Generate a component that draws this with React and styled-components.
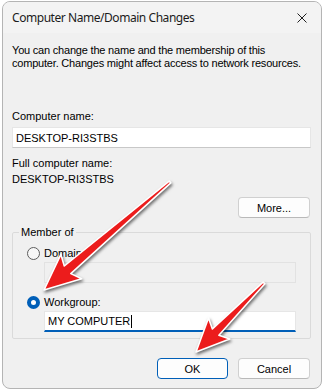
import styled, { createGlobalStyle } from "styled-components";

const GlobalStyle = createGlobalStyle`
  html, body {
    margin: 0;
    padding: 0;
    background: #ffffff;
  }
`;

const ui = `"Liberation Sans", Arial, sans-serif`;

export default function App() {
  return (
    <>
      <GlobalStyle />
      <Page>
        <Window>
          <TitleBar>
            <Title>Computer Name/Domain Changes</Title>
            <CloseIcon viewBox="0 0 10 10">
              <path d="M0.5 0.5 L9.5 9.5 M9.5 0.5 L0.5 9.5" />
            </CloseIcon>
          </TitleBar>
          <Body>
            <Intro>
              You can change the name and the membership of this
              <br />
              computer. Changes might affect access to network resources.
            </Intro>
            <Label $top={40}>Computer name:</Label>
            <Field>DESKTOP-RI3STBS</Field>
            <Label $top={9}>Full computer name:</Label>
            <Value>DESKTOP-RI3STBS</Value>
            <ButtonRow $top={11}>
              <Button>More...</Button>
            </ButtonRow>
            <Group>
              <Legend>Member of</Legend>
              <RadioRow>
                <Radio />
                <RadioLabel>Domain:</RadioLabel>
              </RadioRow>
              <Field $disabled $indent>
                &nbsp;
              </Field>
              <RadioRow $top={13}>
                <Radio $checked />
                <RadioLabel>Workgroup:</RadioLabel>
              </RadioRow>
              <Field $indent $active>
                MY COMPUTER
                <Caret />
              </Field>
            </Group>
            <ButtonRow $top={19}>
              <Button $primary>OK</Button>
              <Button>Cancel</Button>
            </ButtonRow>
          </Body>
        </Window>
        <Overlay viewBox="0 0 323 391">
          <Arrow tail={[170, 182]} tip={[44, 290]} head={36} half={16} neck={5} />
          <Arrow tail={[264, 283]} tip={[196, 352]} head={33} half={15} neck={4.5} />
        </Overlay>
      </Page>
    </>
  );
}

function Arrow({ tail, tip, head, half, neck }) {
  const [tx, ty] = tail;
  const [px, py] = tip;
  const dx = px - tx;
  const dy = py - ty;
  const len = Math.hypot(dx, dy);
  const ux = dx / len;
  const uy = dy / len;
  const nx = -uy;
  const ny = ux;
  const bx = px - ux * head;
  const by = py - uy * head;
  const kx = bx + ux * 5;
  const ky = by + uy * 5;
  const pts = [
    [tx + nx * 1.2, ty + ny * 1.2],
    [kx + nx * neck, ky + ny * neck],
    [bx + nx * half, by + ny * half],
    [px, py],
    [bx - nx * half, by - ny * half],
    [kx - nx * neck, ky - ny * neck],
    [tx - nx * 1.2, ty - ny * 1.2],
  ]
    .map((p) => p.map((v) => v.toFixed(1)).join(","))
    .join(" ");
  return <ArrowShape points={pts} />;
}

const Page = styled.div`
  position: relative;
  width: 323px;
  height: 391px;
  overflow: hidden;
  font-family: ${ui};
`;

const Window = styled.div`
  box-sizing: border-box;
  margin: 1px 0 0 2px;
  width: 320px;
  height: 388px;
  border: 1px solid #b4b4b4;
  border-radius: 8px;
  background: #f0f0f0;
  overflow: hidden;
  display: flex;
  flex-direction: column;
`;

const TitleBar = styled.div`
  height: 31px;
  flex: none;
  display: flex;
  align-items: center;
  justify-content: space-between;
  padding: 0 9px 0 9px;
  background: #f3f3f3;
`;

const Title = styled.span`
  font-family: "Noto Sans", ${ui};
  font-size: 12px;
  letter-spacing: -0.45px;
  color: #1b1b1b;
`;

const CloseIcon = styled.svg`
  width: 10px;
  height: 10px;
  fill: none;
  stroke: #202020;
  stroke-width: 1;
  margin-right: 5px;
`;

const Body = styled.div`
  display: flex;
  flex-direction: column;
  padding: 0 10px 0 9px;
  font-size: 11px;
  color: #000;
`;

const Intro = styled.p`
  margin: 11px 0 0;
  line-height: 13px;
  letter-spacing: -0.2px;
  white-space: nowrap;
`;

const Label = styled.div`
  margin-top: ${(p) => p.$top || 0}px;
  line-height: 13px;
`;

const Value = styled.div`
  margin-top: 3px;
  line-height: 13px;
`;

const Field = styled.div`
  box-sizing: border-box;
  height: 21px;
  margin: ${(p) => (p.$indent ? "2px 14px 0 31px" : "4px 0 0 0")};
  padding: 0 3px;
  display: flex;
  align-items: center;
  background: ${(p) => (p.$disabled ? "#f0f0f0" : "#ffffff")};
  border: 1px solid ${(p) => (p.$disabled ? "#e2e2e2" : "#e6e6e6")};
  border-bottom: ${(p) =>
    p.$active ? "2px solid #005fb8" : `1px solid ${p.$disabled ? "#e2e2e2" : "#c8c8c8"}`};
  color: #000;
`;

const Caret = styled.span`
  display: inline-block;
  width: 1px;
  height: 13px;
  margin-left: 1px;
  background: #000;
`;

const ButtonRow = styled.div`
  display: flex;
  justify-content: flex-end;
  gap: 10px;
  margin-top: ${(p) => p.$top || 0}px;
  padding-right: 1px;
`;

const Button = styled.div`
  box-sizing: border-box;
  width: ${(p) => (p.$primary ? 71 : 72)}px;
  height: 21px;
  display: flex;
  align-items: center;
  justify-content: center;
  border-radius: 4px;
  background: #fdfdfd;
  border: 1px solid ${(p) => (p.$primary ? "#005fb8" : "#d0d0d0")};
  border-bottom-color: ${(p) => (p.$primary ? "#005fb8" : "#b9b9b9")};
  font-size: 11px;
  color: #000;
`;

const Group = styled.fieldset`
  margin: 8px 0 0;
  padding: 0 0 11px;
  height: 113px;
  box-sizing: border-box;
  border: 1px solid #dadada;
  border-radius: 2px;
  display: flex;
  flex-direction: column;
`;

const Legend = styled.legend`
  margin-left: 6px;
  padding: 0 2px;
  font-size: 11px;
  line-height: 13px;
`;

const RadioRow = styled.div`
  display: flex;
  align-items: center;
  gap: 4px;
  margin: ${(p) => p.$top || 8}px 0 0 14px;
  height: 13px;
`;

const Radio = styled.span`
  box-sizing: border-box;
  width: 13px;
  height: 13px;
  border-radius: 50%;
  border: ${(p) => (p.$checked ? "4px solid #005fb8" : "1px solid #5e5e5e")};
  background: ${(p) => (p.$checked ? "#ffffff" : "#f7f7f7")};
`;

const RadioLabel = styled.span`
  line-height: 13px;
`;

const Overlay = styled.svg`
  position: absolute;
  left: 0;
  top: 0;
  width: 323px;
  height: 391px;
  pointer-events: none;
  filter: drop-shadow(1px 2px 1.5px rgba(0, 0, 0, 0.55));
`;

const ArrowShape = styled.polygon`
  fill: #ec1c1c;
  stroke: #ffffff;
  stroke-width: 1.6;
  stroke-linejoin: round;
`;
